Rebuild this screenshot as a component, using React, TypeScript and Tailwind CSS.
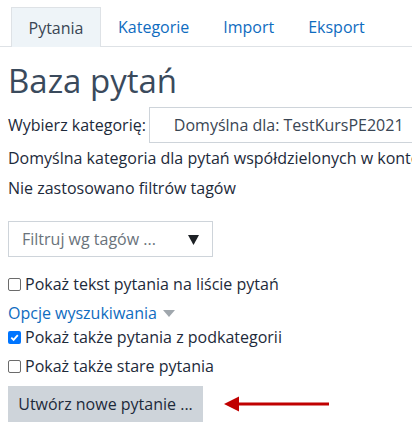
import React from "react";

const FONT = "font-['Open_Sans',sans-serif]";

function Checkbox({ checked, label }: { checked?: boolean; label: string }) {
  return (
    <label className="flex h-[24px] items-center gap-[4px] text-[16px] text-[#1d2a3a]">
      {checked ? (
        <span className="flex h-[13px] w-[13px] items-center justify-center rounded-[2px] bg-[#0075ff]">
          <svg viewBox="0 0 12 12" className="h-[11px] w-[11px]">
            <path d="M2.5 6.2 L5 8.6 L9.6 3.4" fill="none" stroke="white" strokeWidth="2" />
          </svg>
        </span>
      ) : (
        <span className="h-[13px] w-[13px] rounded-[2px] border border-[#6b6b6b] bg-white" />
      )}
      <span>{label}</span>
    </label>
  );
}

export default function App() {
  return (
    <div className={`${FONT} h-[437px] w-[412px] overflow-hidden bg-white`}>
      {/* zakładki */}
      <div className="flex border-b border-[#dee2e6] pl-[11px] pt-[7px]">
        <div className="-mb-px flex h-[40px] w-[90px] items-center justify-center border border-b-0 border-[#dee2e6] bg-[#eef4f8] text-[16px] text-[#3a4654]">
          Pytania
        </div>
        <div className="flex h-[39px] items-center px-[17px] text-[16px] text-[#0f6cbf]">Kategorie</div>
        <div className="flex h-[39px] items-center px-[17px] text-[16px] text-[#0f6cbf]">Import</div>
        <div className="flex h-[39px] items-center px-[17px] text-[16px] text-[#0f6cbf]">Eksport</div>
      </div>

      <div className="pl-[8px]">
        <h2 className="mt-[15px] h-[38px] text-[33px] leading-[38px] text-[#3a4a5c]">Baza pytań</h2>

        <div className="mt-[7px] flex items-center whitespace-nowrap">
          <span className="text-[16px] text-[#1d2a3a]">Wybierz kategorię:</span>
          <div className="ml-[3px] flex h-[36px] w-[300px] shrink-0 items-center border border-[#ced4da] pl-[24px] text-[16px] text-[#3a4654]">
            Domyślna dla: TestKursPE2021
          </div>
        </div>

        <p className="whitespace-nowrap text-[16px] leading-[30px] text-[#1d2a3a]">
          Domyślna kategoria dla pytań współdzielonych w kontekście
        </p>
        <p className="whitespace-nowrap text-[16px] leading-[30px] text-[#1d2a3a]">Nie zastosowano filtrów tagów</p>

        <div className="mt-[18px] flex h-[36px] w-[205px] items-center justify-between border border-[#ced4da] pl-[13px] pr-[13px] text-[16px] text-[#6a737b]">
          <span>Filtruj wg tagów ...</span>
          <svg viewBox="0 0 10 10" className="h-[11px] w-[11px]">
            <path d="M0 1 L10 1 L5 10 Z" fill="#1d2125" />
          </svg>
        </div>

        <div className="mt-[15px]">
          <Checkbox label="Pokaż tekst pytania na liście pytań" />
        </div>

        <div className="mt-[5px] flex h-[24px] items-center gap-[6px] text-[16px] text-[#0f6cbf]">
          <span>Opcje wyszukiwania</span>
          <svg viewBox="0 0 12 7" className="h-[7px] w-[12px]">
            <path d="M0 0 L12 0 L6 7 Z" fill="#a0a7ad" />
          </svg>
        </div>

        <Checkbox checked label="Pokaż także pytania z podkategorii" />
        <div className="mt-[5px]">
          <Checkbox label="Pokaż także stare pytania" />
        </div>

        <div className="mt-[8px] flex items-center">
          <button className="h-[36px] w-[195px] bg-[#ced4da] text-[16px] text-[#1d2a3a]">Utwórz nowe pytanie ...</button>
          <svg viewBox="0 0 106 16" className="ml-[21px] h-[16px] w-[106px]">
            <path d="M0 8 L15 0.5 L15 15.5 Z" fill="#c00000" />
            <rect x="12" y="6.5" width="93" height="3" fill="#c00000" />
          </svg>
        </div>
      </div>
    </div>
  );
}
